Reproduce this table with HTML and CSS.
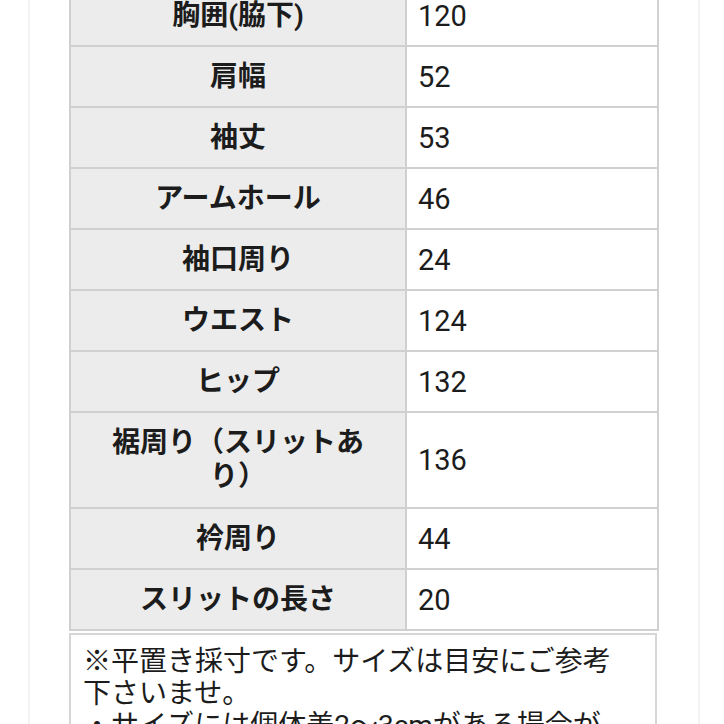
FILE: index.html
```html
<!DOCTYPE html>
<html lang="ja">
<head>
<meta charset="utf-8">
<link rel="stylesheet" href="styles.css">
</head>
<body>
<div class="page">
  <table class="size-table">
    <colgroup><col class="c-label"><col class="c-value"></colgroup>
    <tbody>
      <tr><th>胸囲(脇下)</th><td>120</td></tr>
      <tr><th>肩幅</th><td>52</td></tr>
      <tr><th>袖丈</th><td>53</td></tr>
      <tr><th>アームホール</th><td>46</td></tr>
      <tr><th>袖口周り</th><td>24</td></tr>
      <tr><th>ウエスト</th><td>124</td></tr>
      <tr><th>ヒップ</th><td>132</td></tr>
      <tr class="tall"><th>裾周り（スリットあり）</th><td>136</td></tr>
      <tr><th>衿周り</th><td>44</td></tr>
      <tr><th>スリットの長さ</th><td>20</td></tr>
    </tbody>
  </table>
  <div class="note">
    <p>※平置き採寸です。サイズは目安にご参考下さいませ。</p>
    <p>・サイズには個体差2～3cmがある場合がございます。</p>
  </div>
</div>
</body>
</html>
```
FILE: styles.css
```css
html, body {
  margin: 0;
  padding: 0;
  background: #ffffff;
}
body {
  font-family: Roboto, "Noto Sans CJK JP", sans-serif;
  color: #1c1c1c;
  overflow: hidden;
}
.page {
  box-sizing: border-box;
  width: 672px;
  margin-left: 28px;
  margin-top: -16px;
  padding-left: 39px;
  min-height: 800px;
  border-left: 2px solid #f3f3f3;
  border-right: 2px solid #f3f3f3;
}
.size-table {
  width: 588px;
  table-layout: fixed;
  border-collapse: collapse;
  font-size: 28px;
  line-height: 34px;
}
.c-label { width: 336px; }
.c-value { width: 252px; }
.size-table th,
.size-table td {
  border: 2px solid #d0d0d0;
  padding: 13px 0 12px;
  height: 34px;
  vertical-align: middle;
}
.size-table th {
  background: #ececec;
  font-weight: 700;
  text-align: center;
  padding-left: 30px;
  padding-right: 30px;
}
.size-table td {
  background: #ffffff;
  font-weight: 400;
  text-align: left;
  padding-left: 11px;
  font-size: 29px;
}
.size-table .tall th,
.size-table .tall td {
  padding-top: 13px;
  padding-bottom: 13px;
}
.note {
  box-sizing: border-box;
  width: 588px;
  margin-top: 2px;
  border: 2px solid #d6d6d6;
  padding: 11px 40px 14px 12px;
  font-size: 28px;
  line-height: 32px;
}
.note p {
  margin: 0;
}
```
